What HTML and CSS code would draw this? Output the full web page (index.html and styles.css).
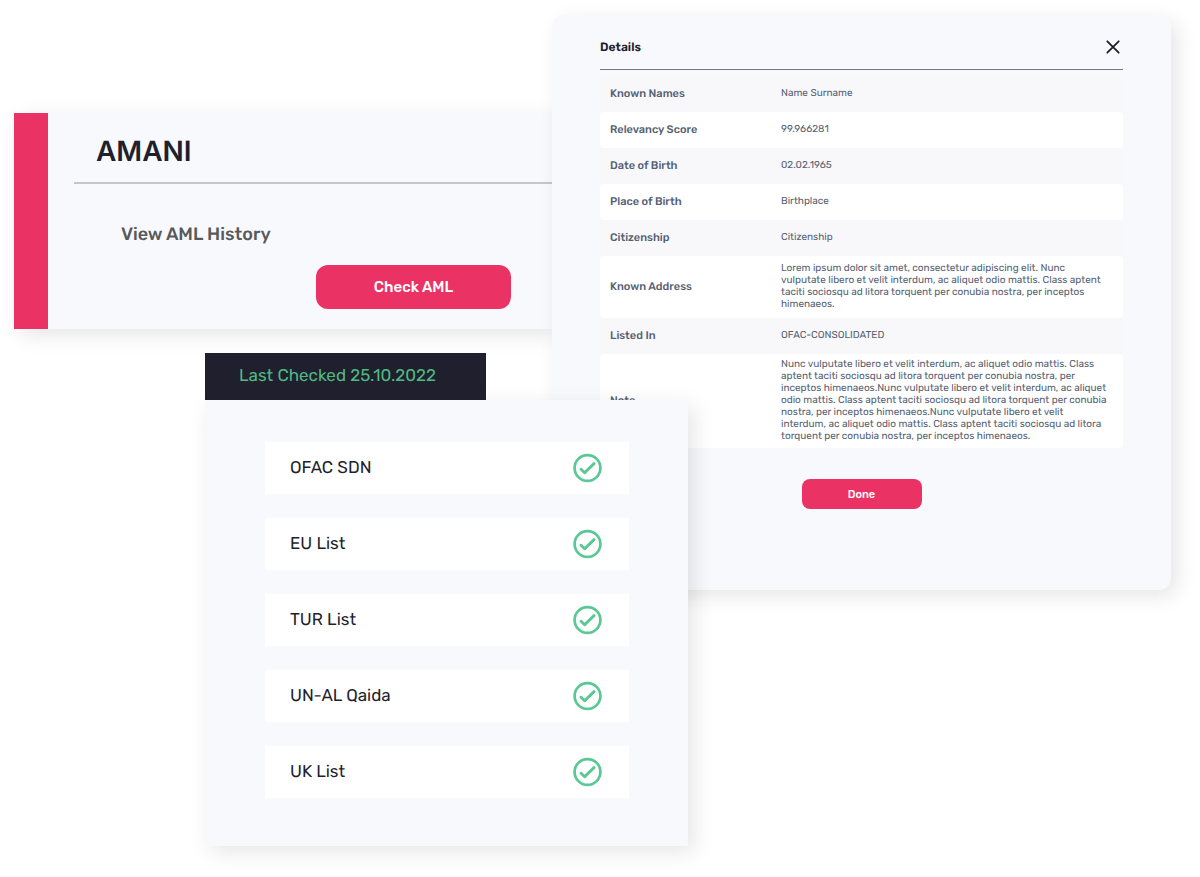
FILE: index.html
```
<!DOCTYPE html>
<html lang="en">
<head>
    <meta charset="UTF-8">
    <meta name="viewport" content="width=device-width, initial-scale=1.0">
    <title>Amani AML Check</title>
    <link rel="stylesheet" href="styles.css">
</head>
<body>

    <!-- Check icon shared by the list rows -->
    <svg class="sprite" aria-hidden="true">
        <symbol id="check" viewBox="0 0 30 30">
            <circle cx="15.5" cy="15" r="12.9" fill="none" stroke="#5ac893" stroke-width="2.7"/>
            <path d="M9 16.2L12.7 19.8L22 10.6" fill="none" stroke="#5ac893" stroke-width="2.9" stroke-linecap="round" stroke-linejoin="round"/>
        </symbol>
    </svg>

    <main class="page">
        <!-- AML card -->
        <section class="card aml">
            <div class="stripe"></div>
            <div class="aml-body">
                <div class="brand">AMANI</div>
                <div class="aml-content">
                    <h1>View AML History</h1>
                    <button class="btn btn-check" type="button">Check AML</button>
                </div>
            </div>
        </section>

        <!-- Checked lists -->
        <section class="lists">
            <h2 class="last-checked">Last Checked 25.10.2022</h2>
            <ul class="card list">
                <li>OFAC SDN <svg class="check"><use href="#check"/></svg></li>
                <li>EU List <svg class="check"><use href="#check"/></svg></li>
                <li>TUR List <svg class="check"><use href="#check"/></svg></li>
                <li>UN-AL Qaida <svg class="check"><use href="#check"/></svg></li>
                <li>UK List <svg class="check"><use href="#check"/></svg></li>
            </ul>
        </section>

        <!-- Details modal -->
        <section class="card details">
            <header class="details-header">
                <h2>Details</h2>
                <button class="close" type="button" aria-label="Close">
                    <svg viewBox="0 0 14 14" width="14" height="14"><path d="M1.3 1.3L12.7 12.7M12.7 1.3L1.3 12.7" stroke="#1d1d2b" stroke-width="1.8" stroke-linecap="round"/></svg>
                </button>
            </header>
            <table>
                <tr><th scope="row">Known Names</th><td>Name Surname</td></tr>
                <tr><th scope="row">Relevancy Score</th><td>99.966281</td></tr>
                <tr><th scope="row">Date of Birth</th><td>02.02.1965</td></tr>
                <tr><th scope="row">Place of Birth</th><td>Birthplace</td></tr>
                <tr><th scope="row">Citizenship</th><td>Citizenship</td></tr>
                <tr class="address">
                    <th scope="row">Known Address</th>
                    <td>Lorem ipsum dolor sit amet, consectetur adipiscing elit. Nunc<br>vulputate libero et velit interdum, ac aliquet odio mattis. Class aptent<br>taciti sociosqu ad litora torquent per conubia nostra, per inceptos<br>himenaeos.</td>
                </tr>
                <tr><th scope="row">Listed In</th><td>OFAC-CONSOLIDATED</td></tr>
                <tr class="note">
                    <th scope="row">Note</th>
                    <td>Nunc vulputate libero et velit interdum, ac aliquet odio mattis. Class<br>aptent taciti sociosqu ad litora torquent per conubia nostra, per<br>inceptos himenaeos.Nunc vulputate libero et velit interdum, ac aliquet<br>odio mattis. Class aptent taciti sociosqu ad litora torquent per conubia<br>nostra, per inceptos himenaeos.Nunc vulputate libero et velit<br>interdum, ac aliquet odio mattis. Class aptent taciti sociosqu ad litora<br>torquent per conubia nostra, per inceptos himenaeos.</td>
                </tr>
            </table>
            <button class="btn btn-done" type="button">Done</button>
        </section>
    </main>

</body>
</html>
```
FILE: styles.css
```
* {
    margin: 0;
    padding: 0;
    box-sizing: border-box;
}
body {
    font-family: Rubik, Roboto, sans-serif;
    text-rendering: geometricPrecision;
    background: #fff;
    color: #1f1f2e;
}
.sprite {
    display: none;
}
/* The cards share grid columns so they overlap each other */
.page {
    display: grid;
    grid-template-columns: 191fr 347fr 136fr 483fr;
    grid-template-rows: auto auto;
    padding: 15px 29px 30px 14px;
}
.card {
    background: #f8f9fd;
    box-shadow: 6px 6px 20px rgba(0, 0, 0, 0.1);
}
.btn {
    display: block;
    background: #ea3364;
    color: white;
    border: none;
    font-family: inherit;
    font-weight: 500;
    cursor: pointer;
}
/* AML card */
.aml {
    grid-column: 1 / 3;
    grid-row: 1;
    display: flex;
    margin-top: 98px;
    height: 216px;
}
.stripe {
    width: 34px;
    background: #ea3364;
}
.aml-body {
    flex: 1;
    padding-left: 26px;
}
.brand {
    height: 71px;
    padding: 22px 22px 0;
    border-bottom: 2px solid #c5c6ca;
    font-family: Inter, sans-serif;
    font-size: 28px;
    font-weight: 600;
    line-height: 32px;
}
.aml-content {
    padding: 38px 41px 0 47px;
}
.aml-content h1 {
    color: #58595b;
    font-size: 18px;
    font-weight: 500;
    line-height: 24px;
}
.btn-check {
    width: 195px;
    height: 44px;
    margin: 19px 0 0 auto;
    border-radius: 12px;
    font-size: 15px;
}
/* Checked lists */
.lists {
    grid-column: 2 / 4;
    grid-row: 2;
    margin-top: 24px;
    z-index: 3;
}
.last-checked {
    position: relative;
    width: 281px;
    padding: 11px 34px 12px;
    background: #1f1f2e;
    color: #4fb983;
    font-size: 17px;
    font-weight: 400;
    line-height: 24px;
    white-space: nowrap;
}
.list {
    display: flex;
    flex-direction: column;
    gap: 24px;
    padding: 42px 59px 48px 60px;
    list-style: none;
}
.list li {
    display: flex;
    align-items: center;
    justify-content: space-between;
    height: 52px;
    padding: 0 27px 0 25px;
    background: white;
    font-size: 17px;
}
.check {
    width: 30px;
    height: 30px;
}
/* Details modal */
.details {
    grid-column: 3 / 5;
    grid-row: 1 / 3;
    align-self: start;
    z-index: 2;
    padding: 0 48px 81px;
    border-radius: 12px;
}
.details-header {
    display: flex;
    align-items: center;
    justify-content: space-between;
    height: 55px;
    padding: 10px 3px 0 0;
    border-bottom: 1px solid #77787e;
}
.details-header h2 {
    font-size: 12px;
    font-weight: 600;
}
.close {
    height: 14px;
    background: none;
    border: none;
    cursor: pointer;
}
.close svg {
    display: block;
}
table {
    width: 100%;
    margin-top: 6px;
    border-spacing: 0;
    color: #556172;
}
tr {
    height: 36px;
    background: #f8f8fb;
}
tr:nth-child(even) {
    background: white;
}
.address {
    height: 62px;
}
.note {
    height: 94px;
}
th,
td {
    padding: 0 0 2px 10px;
}
th {
    width: 171px;
    font-size: 11px;
    font-weight: 500;
    text-align: left;
    border-radius: 4px 0 0 4px;
}
td {
    font-size: 10px;
    line-height: 12px;
    border-radius: 0 4px 4px 0;
}
.btn-done {
    width: 120px;
    height: 30px;
    margin: 31px auto 0;
    border-radius: 8px;
    font-size: 11px;
}
```
